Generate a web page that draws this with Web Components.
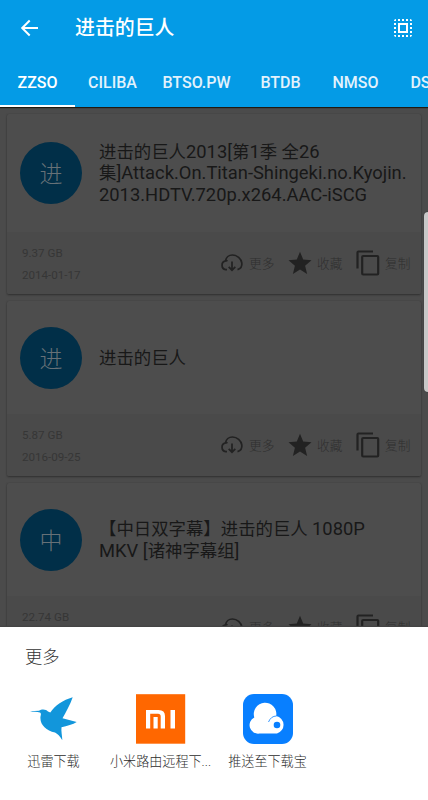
<!DOCTYPE html>
<html lang="zh-CN">
<head>
<meta charset="utf-8">
<title>进击的巨人</title>
<style>
html,body{margin:0;height:100%;overflow:hidden}
body{font-family:Roboto,"Noto Sans CJK SC",sans-serif;background:#4b4b4b}
</style>
</head>
<body>
<search-app></search-app>
<script>
const define = (name, html) => customElements.define(name, class extends HTMLElement {
  constructor() {
    super();
    const t = document.createElement('template');
    t.innerHTML = typeof html === 'function' ? html(this) : html;
    this.attachShadow({mode: 'open'}).append(t.content.cloneNode(true));
  }
});

define('app-bar', `<style>
:host{display:flex;height:56px;align-items:center;box-sizing:border-box;padding:1px 13px 0 20px;color:#fff}
h1{margin:0 auto 0 35px;font-size:19.900px;font-weight:500;line-height:28px;padding-top:1px}
svg{display:block}
svg.all{margin-top:-1px}
</style>
<svg width="20" height="20" viewBox="0 0 20 20" fill="none" stroke="#fff" stroke-width="2"><path d="M18 9H2.500M9.700 1.500 2.200 9l7.500 7.500"/></svg>
<h1><slot></slot></h1>
<svg class="all" width="24" height="24" viewBox="0 0 24 24" fill="#fff"><path d="M3 5h2V3c-1.100 0-2 .9-2 2zm0 8h2v-2H3v2zm4 8h2v-2H7v2zM3 9h2V7H3v2zm10-6h-2v2h2V3zm6 0v2h2c0-1.100-.9-2-2-2zM5 21v-2H3c0 1.100.9 2 2 2zm-2-4h2v-2H3v2zM9 3H7v2h2V3zm2 18h2v-2h-2v2zm8-8h2v-2h-2v2zm0 8c1.100 0 2-.9 2-2h-2v2zm0-12h2V7h-2v2zm0 8h2v-2h-2v2zm-4 4h2v-2h-2v2zm0-16h2V3h-2v2zM7 17h10V7H7v10zm2-8h6v6H9V9z"/></svg>`);

define('tab-item', `<style>
:host{display:flex;flex:none;box-sizing:border-box;height:51px;align-items:center;justify-content:center;padding:3px 0 0;border-bottom:2px solid transparent;font-size:16px;font-weight:500;color:#e2f2fc;white-space:nowrap}
:host([active]){border-color:#fff;color:#fff}
</style><slot></slot>`);

define('tab-strip', `<style>
:host{display:flex;height:51px;overflow:hidden}
</style><slot></slot>`);

define('icon-action', el => {
  const icons = {
    cloud: `<svg width="24" height="24" viewBox="0 0 24 24" fill="none" stroke="#222" stroke-width="1.700"><path d="M7 18.700H5.700a4.500 4.500 0 0 1-.2-8.800C6 6.400 8.900 4 12.500 4c4.600 0 8.700 3.500 9.300 7.900.5 3.500-1 5.700-4.300 6.700M12 10.500v8.300M8.700 15.800l3.300 3.400 3.300-3.400"/><path d="M5.500 9.900c.4-.2 1.300-.2 2 .2"/></svg>`,
    star: `<svg width="24" height="24" viewBox="0 0 24 24" fill="#222"><path d="M12 .7l3.200 7.900 8.300.7-6.400 5.500 2 8.300-7.100-4.500-7.100 4.500 2-8.300L.5 9.300l8.300-.7z"/></svg>`,
    copy: `<svg width="24" height="26" viewBox="0 0 24 26" fill="none" stroke="#222" stroke-width="2.200"><path d="M1.500 18.500V2.500q0-1 1-1H17"/><rect x="6.200" y="6" width="16" height="18.500" rx="1"/></svg>`
  };
  return `<style>:host{display:flex;align-items:center;font-size:12.700px;font-weight:300;color:#2f2f2f;width:68px;flex:none}svg{flex:none;margin-right:5px}span{margin-top:-2px}</style>${icons[el.getAttribute('icon')]}<span><slot></slot></span>`;
});

define('result-card', `<style>
:host{display:block;border-radius:2px;background:#4d4d4d;box-shadow:0 1px 2px #303030,0 0 1px #3d3d3d}
.body{display:flex;align-items:center;height:var(--body,113px);padding-left:13px}
.avatar{width:62px;height:62px;border-radius:50%;background:#012f48;color:#677177;display:grid;place-items:center;font-size:23px;font-weight:300;flex:none;box-sizing:border-box;padding-bottom:2px}
.title{margin-left:17px;font-size:17.400px;line-height:21.500px;color:#181818;white-space:pre;padding-top:2px}
.title ::slotted(b){font-weight:400;font-size:18.350px;line-height:20px}
.foot{height:62px;background:#4a4a4a;display:flex;align-items:center;justify-content:space-between;padding-left:15px;border-radius:0 0 2px 2px}
.meta{font-size:11.600px;line-height:22px;color:#363636;padding-top:2px}
.meta ::slotted(div){height:22px}
.acts{display:flex;width:201px}
</style>
<div class="body"><div class="avatar"><slot name="initial"></slot></div><div class="title"><slot></slot></div></div>
<div class="foot"><div class="meta"><slot name="size"></slot><slot name="date"></slot></div>
<div class="acts"><icon-action icon="cloud">更多</icon-action><icon-action icon="star">收藏</icon-action><icon-action icon="copy">复制</icon-action></div></div>`);

define('share-target', `<style>
:host{display:flex;flex-direction:column;align-items:center;width:107px;flex:none;font-size:13.100px;font-weight:300;color:#2c2c2c;white-space:nowrap}
.icon{height:50px;margin-bottom:7px}
.icon ::slotted(svg){display:block}
</style><div class="icon"><slot name="icon"></slot></div><slot></slot>`);

define('bottom-sheet', `<style>
:host{display:block;position:absolute;left:0;right:0;bottom:0;height:173px;background:#fff;box-shadow:0 -1px 1px #444;box-sizing:border-box;padding-top:18px}
h2{margin:0 0 25px 25px;font-size:17.300px;line-height:24px;font-weight:300;color:#333}
.row{display:flex}
</style><h2><slot name="title"></slot></h2><div class="row"><slot></slot></div>`);

define('scroll-thumb', `<style>:host{display:block;position:absolute;left:424px;top:212px;width:8px;height:180px;border-radius:4px;background:#c8c8c8;box-shadow:0 0 1px #222}</style>`);

define('search-app', `<style>
:host{display:block;position:relative;width:428px;height:800px;overflow:hidden}
header{background:#049be6;height:107px;box-shadow:0 1px 1px #201a12;position:relative}
main{display:flex;flex-direction:column;gap:7px;padding:7px 7px 0}
result-card:first-child{--body:118px}
</style>
<header><app-bar>进击的巨人</app-bar>
<tab-strip><tab-item active style="width:75px">ZZSO</tab-item><tab-item style="width:75px">CILIBA</tab-item><tab-item style="width:93px">BTSO.PW</tab-item><tab-item style="width:75px">BTDB</tab-item><tab-item style="width:75px">NMSO</tab-item><tab-item style="width:55px">DS</tab-item></tab-strip></header>
<main>
<result-card><span slot="initial">进</span>进击的巨人<b>2013[</b>第<b>1</b>季 全<b>26</b>
集<b>]Attack.On.Titan-Shingeki.no.Kyojin.</b>
<b>2013.HDTV.720p.x264.AAC-iSCG</b><div slot="size">9.37 GB</div><div slot="date">2014-01-17</div></result-card>
<result-card><span slot="initial">进</span>进击的巨人<div slot="size">5.87 GB</div><div slot="date">2016-09-25</div></result-card>
<result-card><span slot="initial">中</span>【中日双字幕】进击的巨人 <b>1080P</b>
<b>MKV [</b>诸神字幕组<b>]</b><div slot="size">22.74 GB</div><div slot="date">2016-09-25</div></result-card>
</main>
<scroll-thumb></scroll-thumb>
<bottom-sheet><span slot="title">更多</span>
<share-target><svg slot="icon" width="50" height="50" viewBox="0 0 50 50" fill="#1296db"><path d="M1 17.200 10 16.700C13 14.500 17.500 15.300 19 17.500L21.300 18.500C26 11.500 34 6 43.700 3.200C41 11 37 18 33.500 24.200L47.700 28C44 30.500 38 32 32.500 33.200C32 37 33.200 41.500 33.300 46.200C31 42.500 28.500 39.800 26 38.600C17.500 36.500 11.500 31.500 11.400 24C11.400 21.500 12.800 19.700 11 18.400C8 17.800 4 17.900 1 17.200Z"/></svg>迅雷下载</share-target>
<share-target><svg slot="icon" width="50" height="50" viewBox="0 0 50 50"><rect x="-.3" y=".2" width="49.500" height="49.500" fill="#ff6700"/><path d="M10 16H22.500Q29 16 29 22V34.500H24.700V22.500Q24.700 19.700 22 19.700H14.200V34.500H10ZM17.500 23H21.700V34.500H17.500ZM34.500 16H39V34.500H34.500Z" fill="#fff"/></svg>小米路由远程下...</share-target>
<share-target><svg slot="icon" width="50" height="50" viewBox="0 0 50 50"><rect width="50" height="50" rx="11" fill="#087fff"/><path d="M16.500 39.500A8.500 8.500 0 0 1 11.300 23.500A11.300 11.300 0 1 1 33.200 22A9 9 0 0 1 34 39.500Z" fill="#fff"/><path d="M25.500 28Q28 22 33.500 22" fill="none" stroke="#087fff" stroke-width=".8"/><circle cx="34" cy="31" r="3.300" fill="#087fff"/></svg>推送至下载宝</share-target>
</bottom-sheet>`);
</script>
</body>
</html>
